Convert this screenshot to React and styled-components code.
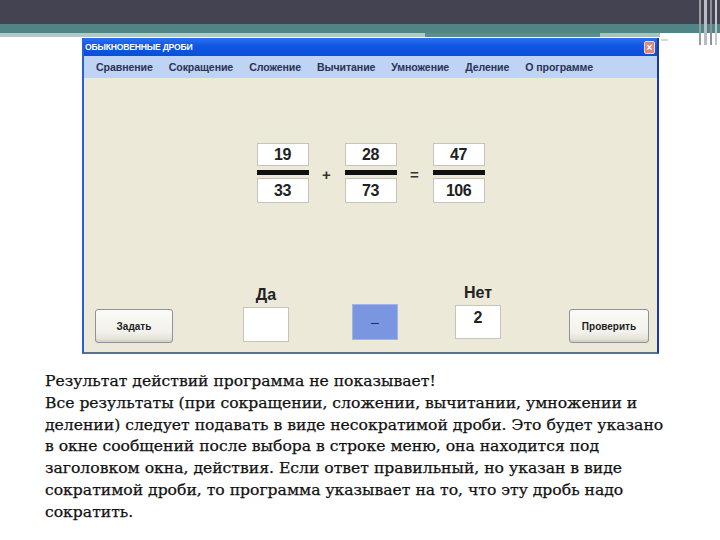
import React from "react";
import styled, { createGlobalStyle } from "styled-components";

const Global = createGlobalStyle`
  html, body { margin: 0; padding: 0; background: #ffffff; }
  body { width: 720px; height: 540px; overflow: hidden; font-family: "Liberation Sans", Arial, sans-serif; }
`;

const Page = styled.div`
  width: 720px;
  height: 540px;
  position: relative;
  background: #fff;
`;

const Header = styled.div`
  position: relative;
  display: flex;
  flex-direction: column;
`;

const DarkBar = styled.div`
  height: 24px;
  background: #434352;
`;

const TealBand = styled.div`
  height: 9px;
  background: #4f8585;
`;

const SubBand = styled.div`
  display: flex;
  height: 4px;
`;

const SubPart = styled.div`
  width: ${(p) => p.$w}px;
  background: ${(p) => p.$c};
`;

const Stripes = styled.div`
  position: absolute;
  top: 0;
  left: 699px;
  width: 18px;
  height: 45px;
  display: flex;
  gap: 3px;
`;

const Stripe = styled.div`
  width: ${(p) => p.$w}px;
  background: ${(p) => p.$c};
`;

const Dash = styled.div`
  position: absolute;
  left: 661px;
  top: 39px;
  width: 7px;
  height: 2px;
  background: #d0dcdc;
`;

const Window = styled.div`
  margin: 1px 0 0 82px;
  width: 577px;
  height: 316px;
  display: flex;
  flex-direction: column;
  box-sizing: border-box;
  border-left: 2px solid #2b5fd6;
  border-right: 2px solid #1b3b9c;
  border-bottom: 2px solid #5d6e8f;
`;

const TitleBar = styled.div`
  height: 18px;
  display: flex;
  align-items: center;
  justify-content: space-between;
  padding: 0 2px 0 0;
  background: linear-gradient(180deg, #2b72f0 0%, #0f56e2 45%, #0a4fd8 100%);
`;

const TitleText = styled.span`
  color: #fff;
  font-size: 8.6px;
  font-weight: bold;
  letter-spacing: -0.2px;
  padding-left: 1px;
`;

const CloseBtn = styled.div`
  width: 11px;
  height: 13px;
  box-sizing: border-box;
  border: 1px solid #f2d6d6;
  border-radius: 2px;
  background: #d9877f;
  color: #fff;
  font-size: 10px;
  line-height: 11px;
  text-align: center;
  font-weight: bold;
`;

const MenuBar = styled.div`
  height: 22px;
  display: flex;
  align-items: center;
  gap: 16px;
  padding-left: 12px;
  background: #bfd4f4;
`;

const MenuItem = styled.span`
  font-size: 10.6px;
  font-weight: bold;
  color: #2a3356;
  letter-spacing: -0.1px;
`;

const Body = styled.div`
  flex: 1;
  display: flex;
  flex-direction: column;
  background: #ece9d8;
  padding: 65px 0 9px;
`;

const Equation = styled.div`
  display: flex;
  justify-content: center;
  align-items: center;
`;

const Fraction = styled.div`
  display: flex;
  flex-direction: column;
  align-items: stretch;
  width: 52px;
`;

const NumBox = styled.div`
  height: ${(p) => p.$h}px;
  box-sizing: border-box;
  background: #fff;
  border: 1px solid #c4c4bc;
  display: flex;
  align-items: center;
  justify-content: center;
  font-size: 16px;
  font-weight: bold;
  color: #222;
  letter-spacing: -0.5px;
`;

const Bar = styled.div`
  height: 5px;
  background: #111;
  margin: 4px 0 3px;
`;

const Operator = styled.div`
  width: 36px;
  text-align: center;
  font-size: 15px;
  font-weight: bold;
  color: #333;
  padding-top: 2px;
`;

const BottomRow = styled.div`
  margin-top: auto;
  display: flex;
  align-items: flex-end;
`;

const Slot = styled.div`
  margin-left: ${(p) => p.$ml}px;
  margin-bottom: ${(p) => p.$mb || 0}px;
  display: flex;
  flex-direction: column;
  align-items: center;
`;

const Button = styled.div`
  width: ${(p) => p.$w}px;
  height: 34px;
  box-sizing: border-box;
  border: 1px solid #8d929c;
  border-radius: 3px;
  background: linear-gradient(180deg, #fbfbf8 0%, #f2f1ea 70%, #dedcd2 100%);
  box-shadow: inset 0 -2px 0 #d6d3c8;
  display: flex;
  align-items: center;
  justify-content: center;
  font-size: 10px;
  font-weight: bold;
  color: #1e1e1e;
`;

const Label = styled.div`
  font-size: 16px;
  font-weight: bold;
  color: #222;
  margin-bottom: 3px;
`;

const AnswerBox = styled.div`
  width: 46px;
  height: ${(p) => p.$h}px;
  box-sizing: border-box;
  background: ${(p) => (p.$blue ? "#7b96e1" : "#fff")};
  border: 1px solid ${(p) => (p.$blue ? "#a3b5e8" : "#c6c5bc")};
  display: flex;
  align-items: ${(p) => (p.$top ? "flex-start" : "center")};
  justify-content: center;
  padding-top: ${(p) => (p.$top ? 3 : 0)}px;
  font-size: ${(p) => (p.$blue ? 14 : 16)}px;
  font-weight: ${(p) => (p.$blue ? "normal" : "bold")};
  color: ${(p) => (p.$blue ? "#1c2868" : "#222")};
`;

const Text = styled.div`
  margin: 17px 0 0 45px;
  font-family: "DejaVu Serif", "Liberation Serif", serif;
  font-size: 15.6px;
  line-height: 21.8px;
  color: #111;
  -webkit-text-stroke: 0.25px #111;
`;

const Line = styled.div`
  white-space: nowrap;
`;

const menu = ["Сравнение", "Сокращение", "Сложение", "Вычитание", "Умножение", "Деление", "О программе"];

const fractions = [
  { n: "19", d: "33" },
  { n: "28", d: "73" },
  { n: "47", d: "106" },
];

const lines = [
  "Результат действий программа не показывает!",
  "Все результаты (при сокращении, сложении, вычитании, умножении и",
  "делении) следует подавать в виде несократимой дроби. Это будет указано",
  "в окне сообщений после выбора в строке меню, она находится под",
  "заголовком окна, действия. Если ответ правильный, но указан в виде",
  "сократимой дроби, то программа указывает на то, что эту дробь надо",
  "сократить.",
];

export default function App() {
  return (
    <Page>
      <Global />
      <Header>
        <DarkBar />
        <TealBand />
        <SubBand>
          <SubPart $w={425} $c="#b3c9c9" />
          <SubPart $w={175} $c="#5a8d8d" />
          <SubPart $w={60} $c="#a9c1c1" />
        </SubBand>
        <Stripes>
          <Stripe $w={2} $c="#9a9aa2" />
          <Stripe $w={3} $c="#b9bcc2" />
          <Stripe $w={2} $c="#8d9098" />
          <Stripe $w={2} $c="#c4c8cc" />
        </Stripes>
        <Dash />
      </Header>
      <Window>
        <TitleBar>
          <TitleText>ОБЫКНОВЕННЫЕ ДРОБИ</TitleText>
          <CloseBtn>×</CloseBtn>
        </TitleBar>
        <MenuBar>
          {menu.map((m) => (
            <MenuItem key={m}>{m}</MenuItem>
          ))}
        </MenuBar>
        <Body>
          <Equation>
            {fractions.map((f, i) => (
              <React.Fragment key={i}>
                <Fraction>
                  <NumBox $h={23}>{f.n}</NumBox>
                  <Bar />
                  <NumBox $h={25}>{f.d}</NumBox>
                </Fraction>
                {i < 2 && <Operator>{i === 0 ? "+" : "="}</Operator>}
              </React.Fragment>
            ))}
          </Equation>
          <BottomRow>
            <Slot $ml={11}>
              <Button $w={78}>Задать</Button>
            </Slot>
            <Slot $ml={70} $mb={1}>
              <Label>Да</Label>
              <AnswerBox $h={35} />
            </Slot>
            <Slot $ml={63} $mb={3}>
              <AnswerBox $h={36} $blue>–</AnswerBox>
            </Slot>
            <Slot $ml={57} $mb={4}>
              <Label>Нет</Label>
              <AnswerBox $h={34} $top>2</AnswerBox>
            </Slot>
            <Slot $ml={68}>
              <Button $w={80}>Проверить</Button>
            </Slot>
          </BottomRow>
        </Body>
      </Window>
      <Text>
        {lines.map((l, i) => (
          <Line key={i}>{l}</Line>
        ))}
      </Text>
    </Page>
  );
}
